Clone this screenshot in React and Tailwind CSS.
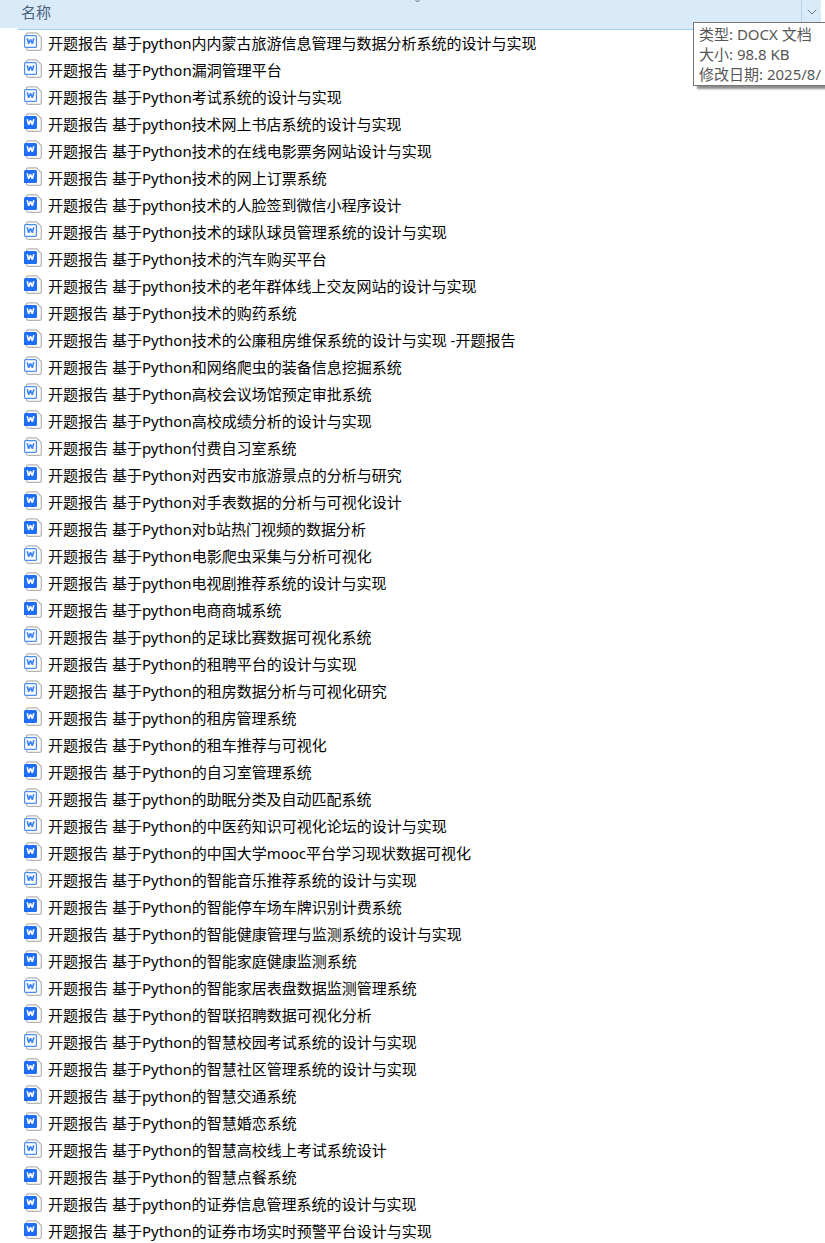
import { ChevronDown } from 'lucide-react';

const files = [
  { name: '开题报告 基于python内内蒙古旅游信息管理与数据分析系统的设计与实现', type: 'docx' },
  { name: '开题报告 基于Python漏洞管理平台', type: 'docx' },
  { name: '开题报告 基于Python考试系统的设计与实现', type: 'docx' },
  { name: '开题报告 基于python技术网上书店系统的设计与实现', type: 'doc' },
  { name: '开题报告 基于Python技术的在线电影票务网站设计与实现', type: 'doc' },
  { name: '开题报告 基于Python技术的网上订票系统', type: 'doc' },
  { name: '开题报告 基于python技术的人脸签到微信小程序设计', type: 'doc' },
  { name: '开题报告 基于Python技术的球队球员管理系统的设计与实现', type: 'docx' },
  { name: '开题报告 基于Python技术的汽车购买平台', type: 'doc' },
  { name: '开题报告 基于python技术的老年群体线上交友网站的设计与实现', type: 'doc' },
  { name: '开题报告 基于Python技术的购药系统', type: 'doc' },
  { name: '开题报告 基于Python技术的公廉租房维保系统的设计与实现 -开题报告', type: 'doc' },
  { name: '开题报告 基于Python和网络爬虫的装备信息挖掘系统', type: 'docx' },
  { name: '开题报告 基于Python高校会议场馆预定审批系统', type: 'docx' },
  { name: '开题报告 基于Python高校成绩分析的设计与实现', type: 'doc' },
  { name: '开题报告 基于python付费自习室系统', type: 'docx' },
  { name: '开题报告 基于Python对西安市旅游景点的分析与研究', type: 'doc' },
  { name: '开题报告 基于Python对手表数据的分析与可视化设计', type: 'doc' },
  { name: '开题报告 基于Python对b站热门视频的数据分析', type: 'doc' },
  { name: '开题报告 基于Python电影爬虫采集与分析可视化', type: 'docx' },
  { name: '开题报告 基于python电视剧推荐系统的设计与实现', type: 'doc' },
  { name: '开题报告 基于python电商商城系统', type: 'doc' },
  { name: '开题报告 基于python的足球比赛数据可视化系统', type: 'docx' },
  { name: '开题报告 基于Python的租聘平台的设计与实现', type: 'docx' },
  { name: '开题报告 基于Python的租房数据分析与可视化研究', type: 'docx' },
  { name: '开题报告 基于python的租房管理系统', type: 'doc' },
  { name: '开题报告 基于Python的租车推荐与可视化', type: 'docx' },
  { name: '开题报告 基于Python的自习室管理系统', type: 'doc' },
  { name: '开题报告 基于python的助眠分类及自动匹配系统', type: 'docx' },
  { name: '开题报告 基于Python的中医药知识可视化论坛的设计与实现', type: 'docx' },
  { name: '开题报告 基于Python的中国大学mooc平台学习现状数据可视化', type: 'doc' },
  { name: '开题报告 基于Python的智能音乐推荐系统的设计与实现', type: 'docx' },
  { name: '开题报告 基于Python的智能停车场车牌识别计费系统', type: 'doc' },
  { name: '开题报告 基于Python的智能健康管理与监测系统的设计与实现', type: 'doc' },
  { name: '开题报告 基于Python的智能家庭健康监测系统', type: 'doc' },
  { name: '开题报告 基于Python的智能家居表盘数据监测管理系统', type: 'docx' },
  { name: '开题报告 基于Python的智联招聘数据可视化分析', type: 'doc' },
  { name: '开题报告 基于Python的智慧校园考试系统的设计与实现', type: 'docx' },
  { name: '开题报告 基于Python的智慧社区管理系统的设计与实现', type: 'doc' },
  { name: '开题报告 基于python的智慧交通系统', type: 'doc' },
  { name: '开题报告 基于Python的智慧婚恋系统', type: 'doc' },
  { name: '开题报告 基于Python的智慧高校线上考试系统设计', type: 'docx' },
  { name: '开题报告 基于Python的智慧点餐系统', type: 'doc' },
  { name: '开题报告 基于python的证券信息管理系统的设计与实现', type: 'doc' },
  { name: '开题报告 基于Python的证券市场实时预警平台设计与实现', type: 'doc' },
];

// doc files get the solid badge, docx files the outlined one
function FileIcon({ type }) {
  const solid = type === 'doc';
  return (
    <svg className="mb-1 shrink-0" width="18" height="19" viewBox="0 0 18 19" fill="none" aria-hidden="true">
      <path
        d="M2.5 3V2.5Q2.5 .8 4.5 .8H12.5L17.3 5.5V16.5Q17.3 18.4 15.3 18.4H4.5Q2.5 18.4 2.5 16.5V16"
        fill="#fff"
        stroke="#b4b4b4"
        strokeWidth="1.2"
      />
      {solid ? (
        <>
          <rect x="0" y="3" width="13" height="13" rx="1.5" fill="#1f6ef7" />
          <path d="M0 13.5L4 16H1.5Q0 16 0 14.5Z" fill="#1b60e4" />
        </>
      ) : (
        <rect x=".6" y="3.6" width="11.8" height="11.8" rx="1" fill="#fff" stroke="#4a8cf8" strokeWidth="1.2" />
      )}
      <path
        d="M3.2 6.2L4.7 11.8L6.5 7.4L8.3 11.8L9.8 6.2"
        stroke={solid ? '#fff' : '#3f83f8'}
        strokeWidth="1.6"
        strokeLinejoin="bevel"
      />
    </svg>
  );
}

function Tooltip() {
  return (
    <div
      role="tooltip"
      className="absolute top-[22px] -right-2 left-[693px] border border-[#767676] bg-white py-px pl-[5px] text-[15px] leading-5 whitespace-nowrap text-[#575757] shadow-[4px_3px_2px_rgba(0,0,0,0.45)]"
    >
      <div>类型: DOCX 文档</div>
      <div>大小: 98.8 KB</div>
      <div>修改日期: 2025/8/</div>
    </div>
  );
}

export default function App() {
  return (
    <div className="relative h-screen overflow-hidden bg-white font-['Noto_Sans','Noto_Sans_CJK_SC',sans-serif] text-[15px] text-black">
      <header className="relative flex h-7 items-stretch bg-[#d9ebf9]">
        <button type="button" className="flex flex-1 items-center pb-1 pl-[21px] text-left text-[#4c607a]">
          名称
        </button>
        <svg className="absolute top-0 left-[414px]" width="7" height="3" viewBox="0 0 7 3" fill="none" aria-hidden="true">
          <path d="M1 -.5L3.5 2L6 -.5" stroke="#5f6b76" />
        </svg>
        <button
          type="button"
          aria-label="筛选"
          className="flex w-5 items-center justify-center border-l border-[#b9d3e6] pb-1 text-[#6b7885]"
        >
          <ChevronDown size={16} strokeWidth={1.5} />
        </button>
        <div className="w-1 bg-white" />
      </header>
      <div className="ml-[18px] h-[2px] border-b border-[#99d1ff] bg-[#d9ebf9]" />

      <ul>
        {files.map((f) => (
          <li key={f.name} className="flex h-[27px] items-center gap-[6px] pl-6 whitespace-nowrap">
            <FileIcon type={f.type} />
            <span>{f.name}</span>
          </li>
        ))}
      </ul>

      <Tooltip />
    </div>
  );
}
